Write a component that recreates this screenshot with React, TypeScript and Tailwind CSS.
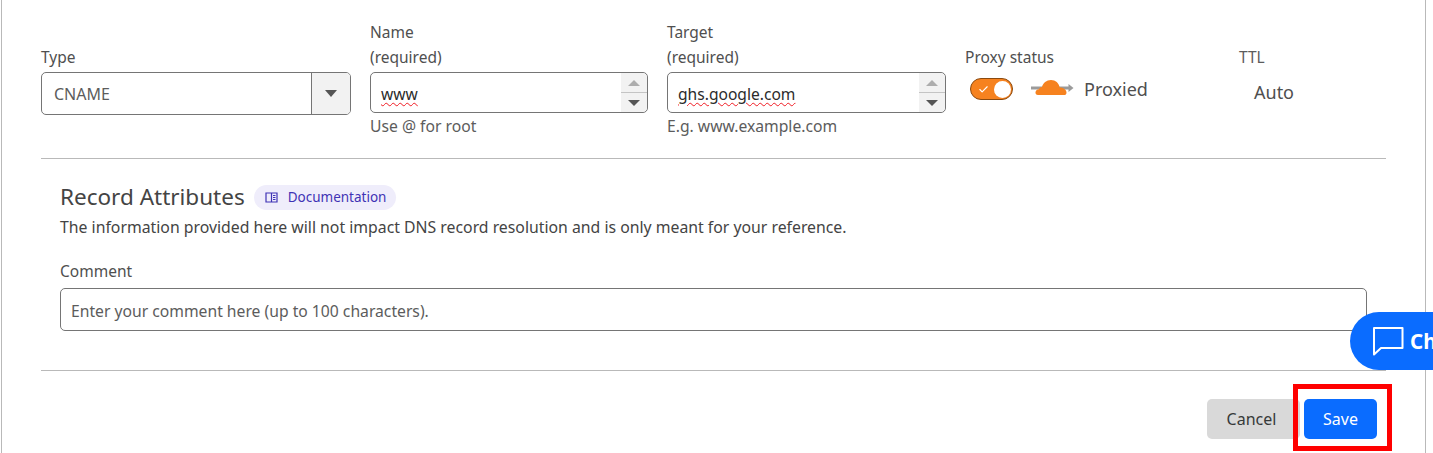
import { Check } from "lucide-react";

const FONT = "font-['Noto_Sans','Open_Sans',sans-serif]";

function Stepper() {
  return (
    <div className="flex h-full w-[26px] shrink-0 flex-col rounded-r-[5px] bg-[#f2f2f2] items-center">
      <div className="flex h-[20px] w-full items-center justify-center border-b border-[#c4c4c4]">
        <div className="h-0 w-0 border-x-[6px] border-b-[6px] border-x-transparent border-b-[#adadad]" />
      </div>
      <div className="flex flex-1 items-center justify-center">
        <div className="h-0 w-0 border-x-[6px] border-t-[6px] border-x-transparent border-t-[#555555]" />
      </div>
    </div>
  );
}

function StepInput({ value, hint, width }: { value: string; hint: string; width: string }) {
  return (
    <div className={width}>
      <div className="text-[15.5px] leading-[25px] text-[#4f4f4f]">
        {value === "www" ? "Name" : "Target"}
        <br />
        (required)
      </div>
      <div className="mt-[2px] flex h-[41px] items-stretch overflow-hidden rounded-[5px] border border-[#757575]">
        <div className="flex-1 pl-[10px] pt-[9px] text-[15.6px] leading-[24px] text-[#2b2b2b]">
          <span className="underline decoration-wavy decoration-[#f01c24] decoration-1 underline-offset-2">
            {value}
          </span>
        </div>
        <Stepper />
      </div>
      <div className="mt-px text-[15.7px] leading-[24px] text-[#5c5c5c]">{hint}</div>
    </div>
  );
}

function Cloud() {
  return (
    <svg width="44" height="20" viewBox="0 0 44 20" className="shrink-0">
      <rect x="0" y="7.5" width="40" height="3" fill="#9b9b9b" />
      <path d="M37.5 5 L42.5 9 L37.5 13 Z" fill="#9b9b9b" />
      <path
        d="M7 16 C3.5 16 3.5 10.5 8 10.2 C8.5 8.8 9.5 8 11 8 C12 4 15.5 1 20 1 C24.5 1 28 4 28.7 8.5 C32 8.5 35.5 10.5 35.5 13.5 C35.5 15.5 34.5 16 33 16 Z"
        fill="#f6821f"
      />
    </svg>
  );
}

export default function App() {
  return (
    <div className={`relative h-[453px] w-[1433px] overflow-hidden bg-white ${FONT}`}>
      <div className="ml-px h-full w-[1425px] border-x border-[#b9b9b9] pl-[39px] pr-[39px]">
        <div className="flex h-[158px] items-start pt-5">
          <div className="w-[310px] shrink-0 pt-[25px]">
            <div className="text-[15.5px] leading-[25px] text-[#4f4f4f]">Type</div>
            <div className="mt-[2px] flex h-[43px] overflow-hidden rounded-[5px] border border-[#757575]">
              <div className="flex flex-1 items-center pl-3 text-[16px] text-[#5c5c5c]">CNAME</div>
              <div className="flex w-[39px] items-center justify-center border-l border-[#757575] bg-[#f2f2f2]">
                <div className="h-0 w-0 border-x-[6px] border-t-[7px] border-x-transparent border-t-[#555555]" />
              </div>
            </div>
          </div>
          <StepInput value="www" hint="Use @ for root" width="ml-[19px] w-[278px] shrink-0" />
          <StepInput value="ghs.google.com" hint="E.g. www.example.com" width="ml-[19px] w-[279px] shrink-0" />
          <div className="ml-[19px] w-[274px] shrink-0 pt-[25px]">
            <div className="text-[15.5px] leading-[25px] text-[#4f4f4f]">Proxy status</div>
            <div className="ml-[5px] mt-[7px] flex items-center">
              <div className="flex h-[22px] w-[43px] items-center justify-between rounded-full border border-[#8a4a10] bg-[#f6821f] pl-[7px] pr-[1px]">
                <Check size={11} strokeWidth={2.5} className="text-white" />
                <div className="h-[17px] w-[17px] rounded-full bg-white" />
              </div>
              <div className="ml-[18px]">
                <Cloud />
              </div>
              <span className="ml-[9px] text-[18px] leading-[24px] text-[#4f4f4f]">Proxied</span>
            </div>
          </div>
          <div className="pt-[25px]">
            <div className="text-[15.5px] leading-[25px] text-[#5c5c5c]">TTL</div>
            <div className="ml-[15px] mt-[10px] text-[18px] leading-[24px] text-[#4f4f4f]">Auto</div>
          </div>
        </div>

        <div className="h-px bg-[#b9b9b9]" />

        <div className="px-[19px] pt-[22px]">
          <div className="flex h-[32px] items-center">
            <h2 className="text-[22.5px] leading-[32px] text-[#444444]">Record Attributes</h2>
            <div className="ml-[9px] flex h-[25px] w-[142px] items-center rounded-full bg-[#efedfb] pl-[11px] text-[13.5px] text-[#3f33b5]">
              <svg width="13" height="11" viewBox="0 0 13 11" fill="none" stroke="currentColor" strokeWidth="1.2">
                <path d="M6.5 1 H1 V10 H6.5 M6.5 1 H12 V10 H6.5 Z" />
                <path d="M8 3.5 H10.5 M8 5.5 H10.5 M8 7.5 H10.5" strokeWidth="1" />
              </svg>
              <span className="ml-[10px]">Documentation</span>
            </div>
          </div>
          <p className="mt-[2px] text-[15.8px] leading-[24px] text-[#444444]">
            The information provided here will not impact DNS record resolution and is only meant for your reference.
          </p>
          <div className="mt-[20px] text-[15.5px] leading-[24px] text-[#4f4f4f]">Comment</div>
          <div className="mt-[5px] flex h-[43px] items-center rounded-[5px] border border-[#757575] pl-[10px] pt-[4px] text-[15.7px] text-[#5c5c5c]">
            Enter your comment here (up to 100 characters).
          </div>
        </div>

        <div className="mt-[39px] h-px bg-[#b9b9b9]" />

        <div className="mt-[28px] flex justify-end gap-1 pr-[9px]">
          <button className="h-10 w-[93px] rounded-[5px] bg-[#d9d9d9] pr-[4px] text-[16px] text-[#36393a]">Cancel</button>
          <button className="h-10 w-[73px] rounded-[5px] bg-[#0a6cff] text-[16px] text-white">Save</button>
        </div>
      </div>

      <div className="absolute left-[1350px] top-[312px] flex h-[58px] w-[120px] items-center rounded-l-[29px] bg-[#0a6cff] pl-[22px] text-white">
        <svg width="32" height="30" viewBox="0 0 32 30" fill="none" stroke="currentColor" strokeWidth="2">
          <path d="M2 2 H30.5 V22 H9 L2 28.5 Z" strokeLinejoin="round" />
        </svg>
        <span className="ml-[6px] text-[20.5px] font-bold">Chat</span>
      </div>

      <div className="absolute left-[1293px] top-[384px] h-[67px] w-[99px] border-[5px] border-[#ff0000]" />
    </div>
  );
}
